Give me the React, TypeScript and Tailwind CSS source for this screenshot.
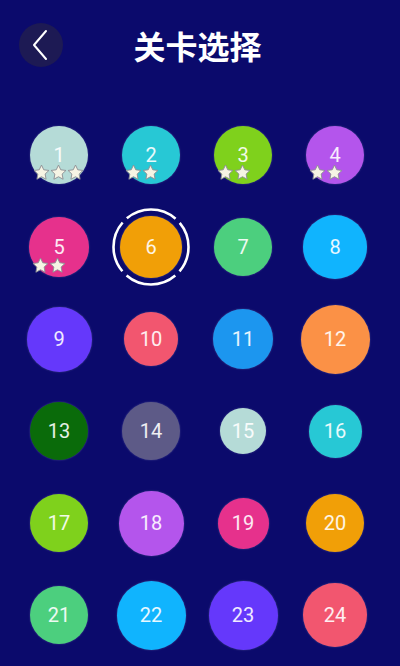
import React from "react";

type Level = {
  n: number;
  color: string;
  size: number;
  stars?: number;
  current?: boolean;
};

const levels: Level[] = [
  { n: 1, color: "#b5dbd7", size: 58, stars: 3 },
  { n: 2, color: "#27c8d5", size: 58, stars: 2 },
  { n: 3, color: "#7fd11c", size: 58, stars: 2 },
  { n: 4, color: "#b455ec", size: 58, stars: 2 },
  { n: 5, color: "#e6318c", size: 60, stars: 2 },
  { n: 6, color: "#f19f07", size: 62, current: true },
  { n: 7, color: "#4ccf7e", size: 58 },
  { n: 8, color: "#10b4fe", size: 64 },
  { n: 9, color: "#6538fb", size: 65 },
  { n: 10, color: "#f2566f", size: 54 },
  { n: 11, color: "#1c96ef", size: 60 },
  { n: 12, color: "#fb9146", size: 69 },
  { n: 13, color: "#0a6b0a", size: 58 },
  { n: 14, color: "#5d5a87", size: 58 },
  { n: 15, color: "#b5dbd7", size: 46 },
  { n: 16, color: "#27c8d5", size: 53 },
  { n: 17, color: "#7fd11c", size: 58 },
  { n: 18, color: "#b455ec", size: 65 },
  { n: 19, color: "#e6318c", size: 51 },
  { n: 20, color: "#f19f07", size: 58 },
  { n: 21, color: "#4ccf7e", size: 58 },
  { n: 22, color: "#10b4fe", size: 69 },
  { n: 23, color: "#6538fb", size: 69 },
  { n: 24, color: "#f2566f", size: 64 },
];

const Star = () => (
  <svg width="17" height="17" viewBox="0 0 24 24">
    <path
      d="M12 1.5l3.2 6.7 7.3.9-5.4 5.1 1.4 7.3L12 18l-6.5 3.5 1.4-7.3-5.4-5.1 7.3-.9z"
      fill="#f6f4e4"
      stroke="#8d8f93"
      strokeWidth="1.3"
      strokeLinejoin="round"
    />
  </svg>
);

const Ring = () => (
  <svg
    width="80"
    height="80"
    viewBox="0 0 80 80"
    className="absolute left-1/2 top-1/2 -translate-x-1/2 -translate-y-1/2 pointer-events-none"
  >
    <circle
      cx="40"
      cy="40"
      r="37.5"
      fill="none"
      stroke="#ffffff"
      strokeWidth="2.6"
      strokeDasharray="53 5.9"
      strokeDashoffset="26.5"
    />
  </svg>
);

const LevelButton = ({ level }: { level: Level }) => (
  <div className="relative flex h-[92px] items-center justify-center">
    {level.current && <Ring />}
    <div
      className="relative flex items-center justify-center rounded-full shadow-[0_0_2px_rgba(255,255,255,0.25)]"
      style={{ width: level.size, height: level.size, backgroundColor: level.color }}
    >
      <span className="text-[20px] leading-none text-white/90 font-['Roboto',sans-serif]">
        {level.n}
      </span>
      {level.stars ? (
        <div className="absolute bottom-[3px] left-[3px] flex">
          {Array.from({ length: level.stars }).map((_, i) => (
            <Star key={i} />
          ))}
        </div>
      ) : null}
    </div>
  </div>
);

export default function App() {
  return (
    <div className="h-[666px] w-[400px] overflow-hidden bg-[#0b0a6c] font-['Roboto','Noto_Sans_CJK_SC',sans-serif]">
      {/* Header */}
      <div className="flex items-center pl-[19px] pr-[24px] pt-[23px]">
        <button
          type="button"
          className="flex h-[44px] w-[44px] items-center justify-center rounded-full bg-[#1d1a54]"
        >
          <svg width="20" height="32" viewBox="0 0 20 32">
            <path d="M15 2L3 16l12 14" fill="none" stroke="#ffffff" strokeWidth="2" strokeLinecap="round" strokeLinejoin="round" />
          </svg>
        </button>
        <h1 className="flex-1 text-center text-[32px] font-bold leading-none text-white font-['Noto_Sans_CJK_SC',sans-serif]">
          关卡选择
        </h1>
        <div className="w-[44px]" />
      </div>

      {/* Levels */}
      <div className="mt-[42px] grid grid-cols-[repeat(4,92px)] pl-[13px]">
        {levels.map((lv) => (
          <LevelButton key={lv.n} level={lv} />
        ))}
      </div>
    </div>
  );
}
